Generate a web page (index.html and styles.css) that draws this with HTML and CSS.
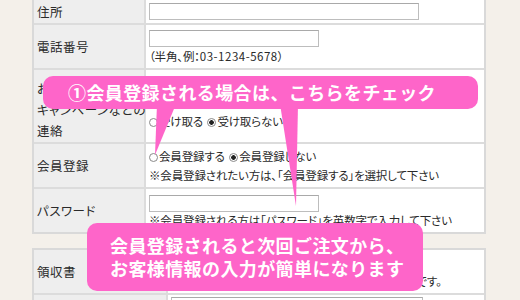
FILE: index.html
```html
<!DOCTYPE html>
<html lang="ja">
<head>
    <meta charset="UTF-8">
    <meta name="viewport" content="width=device-width, initial-scale=1.0">
    <title>会員登録フォーム</title>
    <link rel="stylesheet" href="styles.css">
</head>
<body>
    <div class="page">
        <div class="form form-first">
            <div class="row r-address">
                <div class="label">住所</div>
                <div class="value center"><span class="box box-long"></span></div>
            </div>
            <div class="row r-tel">
                <div class="label">電話番号</div>
                <div class="value stack">
                    <span class="box box-short"></span>
                    <span class="note">（半角、例：<span class="num">03-1234-5678</span>）</span>
                </div>
            </div>
            <div class="row r-news">
                <div class="label multi">お得な情報や<br>キャンペーンなどの<br>連絡</div>
                <div class="value news">
                    <label class="opt"><input type="radio" name="news">受け取る</label>
                    <label class="opt"><input type="radio" name="news" checked>受け取らない</label>
                </div>
            </div>
            <div class="row r-member">
                <div class="label">会員登録</div>
                <div class="value member">
                    <div>
                        <label class="opt"><input type="radio" name="member">会員登録する</label>
                        <label class="opt"><input type="radio" name="member" checked>会員登録しない</label>
                    </div>
                    <div>※会員登録されたい方は、「会員登録する」を選択して下さい</div>
                </div>
            </div>
            <div class="row r-pass">
                <div class="label">パスワード</div>
                <div class="value stack pass">
                    <span class="box box-short"></span>
                    <span class="note">※会員登録される方は「パスワード」を英数字で入力して下さい</span>
                </div>
            </div>
        </div>

        <div class="form form-second">
            <div class="row r-receipt">
                <div class="label">領収書</div>
                <div class="value receipt">
                    <div>領収書が必要な方はお選び下さい。</div>
                    <div>※領収書は、ご注文商品に同梱してお送りする形式です。</div>
                </div>
            </div>
            <div class="row r-next">
                <div class="label"></div>
                <div class="value next"><span class="box box-mid"></span></div>
            </div>
        </div>

        <!-- 吹き出し -->
        <svg class="tails" width="520" height="300" viewBox="0 0 520 300">
            <polygon points="157,104 176,104 155,155" />
            <polygon points="280,104 298,104 296,206" />
        </svg>
        <div class="bubble bubble-check">①会員登録される場合は、こちらをチェック</div>
        <div class="bubble bubble-merit">会員登録されると次回ご注文から、<br>お客様情報の入力が簡単になります</div>
    </div>
</body>
</html>
```

FILE: styles.css
```css
body {
    margin: 0;
    background: #f4f0ea;
    font-family: "Noto Sans CJK JP", "Liberation Sans", sans-serif;
    font-size: 12px;
    color: #2a2a2a;
}
.page {
    position: relative;
    width: 520px;
    height: 300px;
    overflow: hidden;
}

/* form tables */
.form {
    margin-left: 32px;
    width: 454px;
    box-sizing: border-box;
    border: 2px solid #d9d9d9;
    font-feature-settings: "palt";
}
.form-first {
    margin-top: -2px;
}
.form-second {
    margin-top: 14px;
    border-bottom: none;
}
.row {
    display: grid;
    grid-template-columns: 112px 1fr;
    border-bottom: 2px solid #dcdcdc;
}
.form-first .row:last-child {
    border-bottom: none;
}
.form-second .row {
    grid-template-columns: 134px 1fr;
}
.label {
    background: #eeeeee;
    border-right: 2px solid #dcdcdc;
    display: flex;
    align-items: center;
    padding-left: 3px;
    white-space: nowrap;
    font-size: 12.5px;
    letter-spacing: 0.5px;
}
.label.multi {
    line-height: 21px;
    padding-top: 7px;
}
.value {
    background: #fff;
    padding-left: 3px;
    white-space: nowrap;
    font-size: 11.5px;
    letter-spacing: -0.15px;
}
.center {
    display: flex;
    align-items: center;
}
.stack {
    display: flex;
    flex-direction: column;
    align-items: flex-start;
    padding-top: 5px;
}
.note {
    line-height: 18px;
}
.num {
    letter-spacing: 0.5px;
}

.r-address { height: 23px; }
.r-tel { height: 43px; }
.r-news { height: 72px; }
.r-member { height: 43px; }
.r-pass { height: 43px; }
.r-receipt { height: 43px; }
.r-next { height: 20px; }

.pass {
    padding-top: 6px;
}
.pass .note {
    line-height: 17px;
}
.news {
    padding-top: 41px;
    line-height: 20px;
}
.member {
    display: flex;
    flex-direction: column;
    justify-content: center;
    line-height: 19px;
    padding-top: 1px;
}
.receipt {
    line-height: 20px;
    padding-top: 1px;
}
.next {
    padding-top: 2px;
}

/* input boxes */
.box {
    display: block;
    height: 17px;
    box-sizing: border-box;
    border: 1px solid #bdbdbd;
    border-top-color: #a9a9a9;
    background: #fff;
}
.box-long { width: 270px; }
.box-short { width: 170px; }
.box-mid { width: 252px; height: 20px; }

/* radios */
.opt {
    margin-right: 2px;
}
.opt input {
    appearance: none;
    width: 9px;
    height: 9px;
    margin: 0 1px 0 0;
    border: 1px solid #8a8a8a;
    border-radius: 50%;
    background: #fff;
    vertical-align: -1px;
}
.opt input:checked {
    background: radial-gradient(circle, #222 0 2px, #fff 2.6px);
}

/* callouts */
.tails {
    position: absolute;
    left: 0;
    top: 0;
    fill: #fe65c9;
}
.bubble {
    position: absolute;
    background: #fe65c9;
    color: #fff;
    font-weight: 700;
    font-size: 18px;
    letter-spacing: 0.4px;
    border-radius: 10px;
    box-sizing: border-box;
    white-space: nowrap;
}
.bubble-check {
    left: 43px;
    top: 76px;
    width: 435px;
    height: 33px;
    line-height: 33px;
    padding-left: 25px;
}
.bubble-merit {
    left: 87px;
    top: 223px;
    width: 336px;
    height: 68px;
    line-height: 23px;
    padding: 11px 0 0 23px;
}
```
